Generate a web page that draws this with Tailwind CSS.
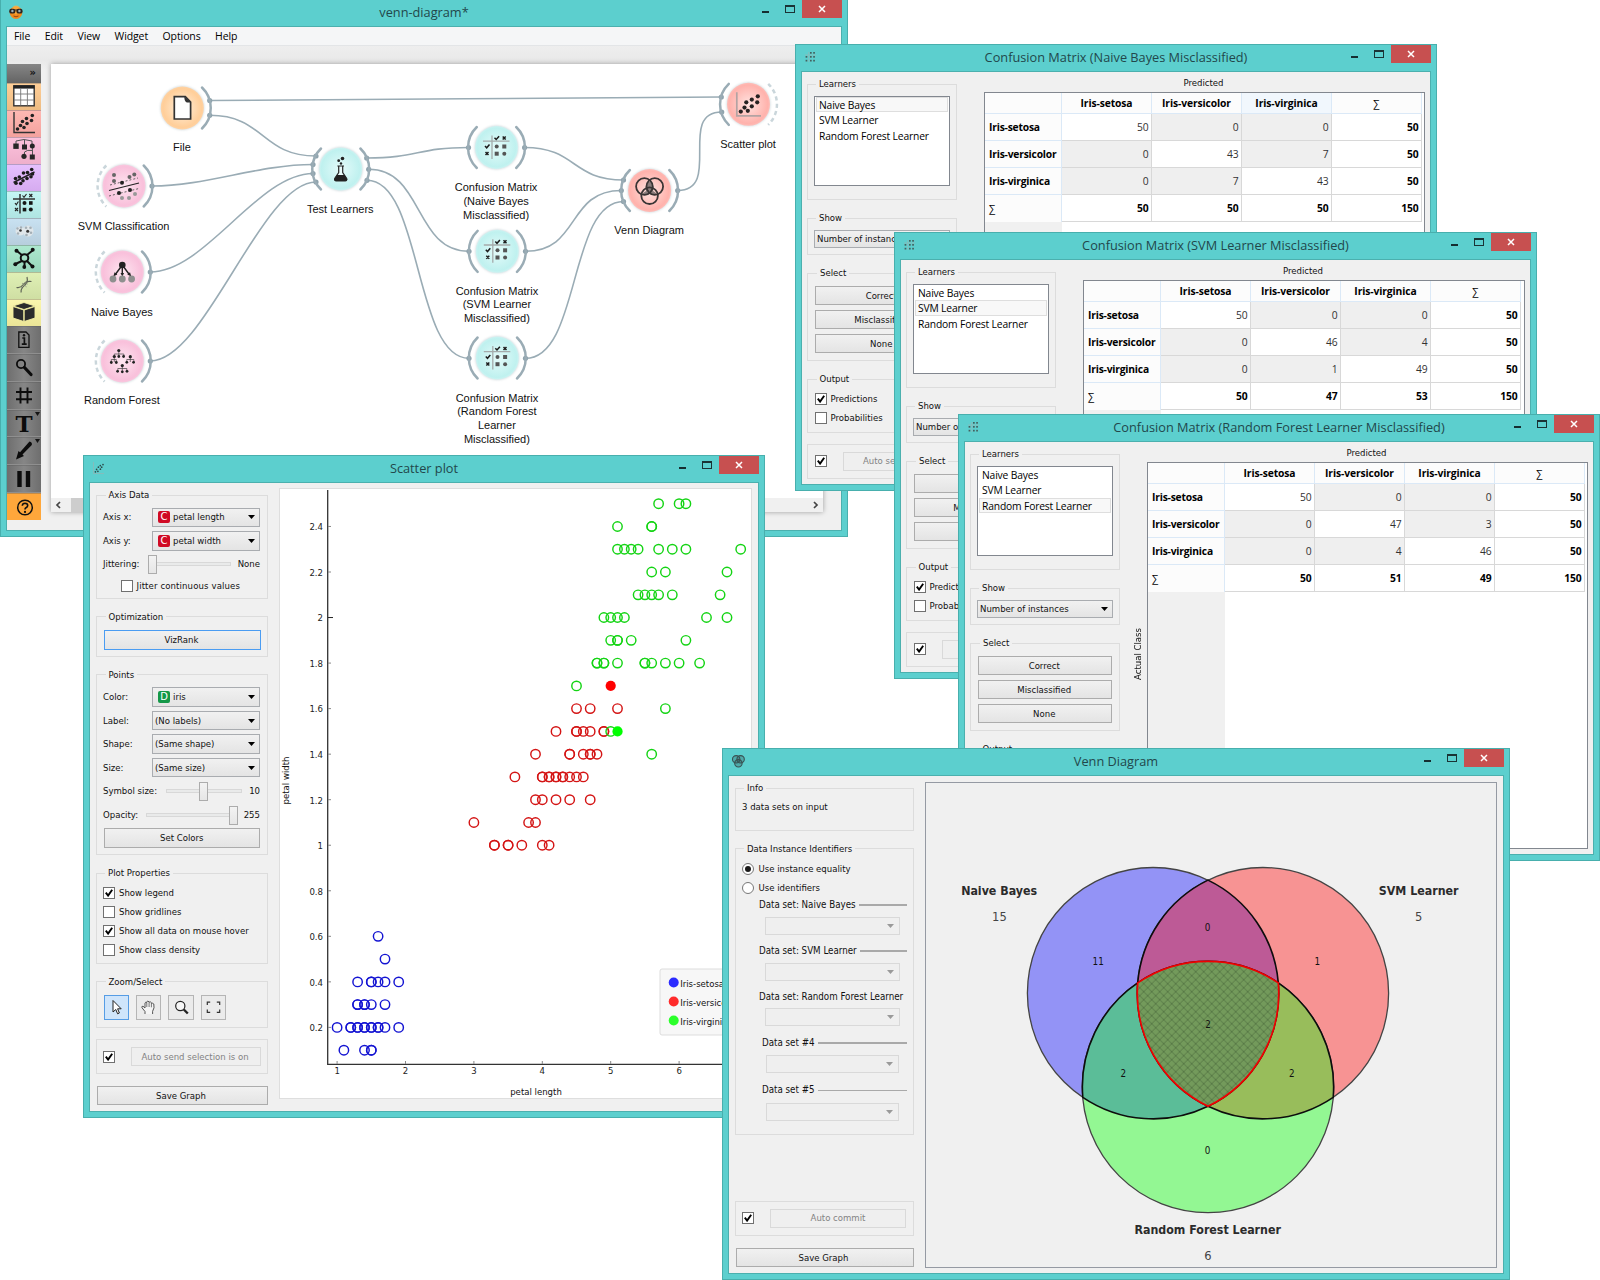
<!DOCTYPE html>
<html lang="en">
<head>
<meta charset="utf-8">
<title>venn-diagram</title>
<script src="https://cdn.jsdelivr.net/npm/@tailwindcss/browser@4"></script>
</head>
<body class="bg-white">
<div id="desktop" class="relative w-[1600px] h-[1280px] overflow-hidden bg-white font-['DejaVu_Sans_Condensed',sans-serif] text-[9.5px] leading-[12px] text-[#111]"></div>

<script>
/* ---------- shared widgets ---------- */
const win = (pos, title, icon, body) => `
<section class="absolute ${pos} flex flex-col border border-[#48afad] bg-[#5ccfce] px-[5px] pb-[5px]">
  <header class="relative h-[26px] shrink-0">
    <div class="absolute left-[3px] top-[5px]">${icon}</div>
    <h1 class="text-center text-[12.75px] leading-[25px] text-[#22474b] font-['Open_Sans',sans-serif] whitespace-nowrap">${title}</h1>
    <div class="absolute right-[0.5px] top-0 flex">
      <div class="w-[7px] h-[2px] mt-[11px] mr-[16px] bg-[#152e30]"></div>
      <div class="w-[10px] h-[8px] mt-[5px] mr-[7px] border border-t-2 border-[#1a3335]"></div>
      <div class="w-[40px] h-[18px] bg-[#c75050] grid place-items-center">
        <svg width="8" height="8" viewBox="0 0 8 8" stroke="#fff" stroke-width="1.5"><path d="M1 1L7 7M7 1L1 7"/></svg>
      </div>
    </div>
  </header>
  <div class="flex-1 min-h-0 border border-[#4bb0ae] bg-[#f0f0f0]">${body}</div>
</section>`;

const group = (title, cls, body) => `
<fieldset class="border border-[#dcdcdc] min-w-0 ${cls}">
  <legend class="ml-[2px] px-[3px] h-[12px] leading-[11px] whitespace-nowrap">${title}</legend>
  ${body}
</fieldset>`;

const caret = c => `<svg width="7" height="4" viewBox="0 0 7 4"><path d="M0 0H7L3.5 4Z" fill="${c}"/></svg>`;
const combo = (text, cls) => `<div class="flex items-center justify-between border border-[#a9acb0] bg-linear-to-b from-[#f1f1f1] to-[#e4e4e4] pl-[2px] pr-[4px] whitespace-nowrap ${cls}"><span class="flex items-center gap-[3px]">${text}</span>${caret('#000')}</div>`;
const deadCombo = cls => `<div class="flex items-center justify-end border border-[#d9d9d9] bg-[#efefef] pr-[5px] ${cls}">${caret('#9a9a9a')}</div>`;
const button = (text, cls) => `<div class="grid place-items-center border border-[#acacac] bg-linear-to-b from-[#f1f1f1] to-[#e4e4e4] whitespace-nowrap ${cls}">${text}</div>`;
const deadButton = (text, cls) => `<div class="grid place-items-center border border-[#d9d9d9] bg-[#efefef] text-[#838383] whitespace-nowrap ${cls}">${text}</div>`;
const box = on => `<span class="size-[12px] shrink-0 border border-[#707070] bg-white grid place-items-center">${on ? '<svg width="8" height="8" viewBox="0 0 8 8"><path d="M0.8 3.6L3.1 6.6L7.2 0.8" fill="none" stroke="#000" stroke-width="1.9"/></svg>' : ''}</span>`;
const check = (on, text) => `<label class="flex h-[19px] items-center gap-[4px] whitespace-nowrap">${box(on)}${text}</label>`;

/* ---------- window icons ---------- */
const owlIcon = `<svg width="15" height="15" viewBox="0 0 15 15"><circle cx="7" cy="7.6" r="6.3" fill="#f08a1c"/><circle cx="7" cy="5" r="4.4" fill="#ffb347" opacity=".7"/><rect x=".2" y="3.8" width="6.2" height="4.8" rx="2.2" fill="#2b2420"/><rect x="7.4" y="3.8" width="6.2" height="4.8" rx="2.2" fill="#2b2420"/><path d="M6 5H8" stroke="#2b2420"/><circle cx="3.4" cy="6" r="1.2" fill="#9bb0b8"/><circle cx="10.4" cy="6" r="1.2" fill="#9bb0b8"/><path d="M4.5 11Q7 12.6 9.5 11" fill="none" stroke="#8c3b10" stroke-width=".9"/></svg>`;
const matrixIcon = `<svg width="14" height="14" viewBox="0 0 14 14"><path d="M4.7 2V12M1 5H12" stroke="#8fb7b6" stroke-width=".8"/><g fill="#44605f"><rect x="6" y="2" width="1.7" height="1.7"/><rect x="9.2" y="2" width="1.7" height="1.7"/><rect x="1.6" y="6" width="1.7" height="1.7"/><rect x="6" y="6" width="1.7" height="1.7"/><rect x="9.2" y="6" width="1.7" height="1.7"/><rect x="1.6" y="9.8" width="1.7" height="1.7"/><rect x="6" y="9.8" width="1.7" height="1.7"/><rect x="9.2" y="9.8" width="1.7" height="1.7"/></g></svg>`;
const plotIcon = `<svg width="14" height="14" viewBox="0 0 14 14"><path d="M1.5 1V12.5H12" fill="none" stroke="#8fb7b6" stroke-width=".8"/><g fill="#2c4a4a"><circle cx="3.4" cy="10.8" r=".85"/><circle cx="5.9" cy="10.3" r=".85"/><circle cx="4.6" cy="8.4" r=".85"/><circle cx="6.4" cy="6.2" r=".85"/><circle cx="8.4" cy="8.2" r=".85"/><circle cx="8.3" cy="4.6" r=".85"/><circle cx="9.7" cy="6.2" r=".85"/><circle cx="11" cy="3.6" r=".85"/></g></svg>`;
const vennIcon = `<svg width="15" height="15" viewBox="0 0 15 15" fill="#2f5354" fill-opacity=".3" stroke="#3a5152" stroke-width="1.1"><circle cx="5.2" cy="5.3" r="3.7"/><circle cx="9.6" cy="5.3" r="3.7"/><circle cx="7.4" cy="9.3" r="3.7"/></svg>`;

/* ---------- workflow window ---------- */
const cellIcon = inner => `<svg class="block" width="34" height="26" viewBox="0 0 34 26">${inner}</svg>`;
const tools = [
  ['h-[27px] bg-linear-to-b from-[#ffcf98] to-[#edbb82]', '<rect x="6.8" y="2.8" width="20.4" height="20" fill="#fff" stroke="#333" stroke-width="1.4"/><path d="M6.5 4H27.5" stroke="#222" stroke-width="3.2"/><path d="M13.7 5V22.5M20.4 5V22.5M7 11H27M7 17H27" stroke="#777" stroke-width=".9"/>'],
  ['h-[27px] bg-linear-to-b from-[#ffb9b3] to-[#f3a29e]', '<path d="M7 2V22.5H28" fill="none" stroke="#333" stroke-width="1.4"/><g fill="#222"><circle cx="10.5" cy="19" r="1.8"/><circle cx="13.5" cy="15.5" r="1.8"/><circle cx="17" cy="17.5" r="1.8"/><circle cx="15.5" cy="11.5" r="1.8"/><circle cx="20" cy="13.5" r="1.8"/><circle cx="19.5" cy="8.5" r="1.8"/><circle cx="24.5" cy="10.5" r="1.8"/><circle cx="25.3" cy="5.5" r="1.8"/></g>'],
  ['h-[27px] bg-linear-to-b from-[#fcc3dd] to-[#efafcb]', '<path d="M9 8V4Q17 1 25 4V8M17.5 3V8M17.5 18V15Q20 12.5 25.5 13.5V18M25.4 8V14" fill="none" stroke="#555" stroke-width="1"/><g fill="#262626"><rect x="6.3" y="6.5" width="5.4" height="5.4"/><rect x="15" y="7.5" width="5" height="5"/><circle cx="25.3" cy="9" r="2.5"/><circle cx="17" cy="19.3" r="2.6"/><rect x="22.8" y="17.5" width="5" height="5"/></g>'],
  ['h-[27px] bg-linear-to-b from-[#e6c1ff] to-[#d6abf0]', '<path d="M6.5 18.5L27.5 8" stroke="#222" stroke-width="1.4"/><g fill="#1c1c1c"><circle cx="8.5" cy="14.5" r="1.8"/><circle cx="9" cy="19.3" r="1.8"/><circle cx="12.3" cy="13" r="1.8"/><circle cx="13.7" cy="19.5" r="1.8"/><circle cx="16.5" cy="9" r="1.8"/><circle cx="16" cy="16.7" r="1.8"/><circle cx="20.5" cy="8.5" r="1.8"/><circle cx="20" cy="14.5" r="1.8"/><circle cx="24.7" cy="5.5" r="1.8"/><circle cx="25.5" cy="10" r="1.8"/><circle cx="24" cy="12.8" r="1.8"/></g>'],
  ['h-[27px] bg-linear-to-b from-[#c5f7f5] to-[#afe4e2]', '<path d="M13 3V22.5M6 8H28" stroke="#333" stroke-width="1.5"/><path d="M15.5 4.5L17 6.3L19.5 3M8 12L9.3 13.8L11.4 10.5M22.3 3L25.3 6M25.3 3L22.3 6M8 17L11 20M11 17L8 20" fill="none" stroke="#222" stroke-width="1.1"/><g fill="#151515"><circle cx="17.5" cy="12" r="2"/><rect x="22" y="10.2" width="3.6" height="3.6"/><rect x="15.7" y="16.8" width="3.6" height="3.6"/><circle cx="23.8" cy="18.6" r="2"/></g>'],
  ['h-[27px] bg-linear-to-b from-[#c9e2f2] to-[#b7cedd]', '<g fill="#dfe6ea"><circle cx="13" cy="13" r="4.5"/><circle cx="21" cy="13" r="5.5"/></g><g fill="#a5b0b7"><circle cx="10.5" cy="10.5" r="1.2"/><circle cx="14" cy="9.5" r="1.2"/><circle cx="11" cy="15.5" r="1.2"/><circle cx="19" cy="9.8" r="1.3"/><circle cx="23.5" cy="9.8" r="1.3"/><circle cx="19.5" cy="17" r="1.3"/><circle cx="24" cy="14.8" r="1.3"/></g><circle cx="13.5" cy="12.5" r="1.3" fill="#333"/><circle cx="20.7" cy="13.2" r="1.5" fill="#333"/>'],
  ['h-[27px] bg-linear-to-b from-[#ade9cf] to-[#99d6bb]', '<g stroke="#111" stroke-width="2" fill="none"><circle cx="17.5" cy="13" r="3.8"/><path d="M14.8 10L10 6M20 10L25.5 5.5M14.8 16L8.5 19M20 16L25.5 21.5M17.5 17V21"/></g><g fill="#111"><circle cx="9.5" cy="5.7" r="2"/><circle cx="25.7" cy="4.8" r="2"/><circle cx="8.3" cy="19.3" r="2"/><circle cx="25.5" cy="21.5" r="2"/><circle cx="17.3" cy="22" r="1.9"/></g>'],
  ['h-[27px] bg-linear-to-b from-[#e0f0b6] to-[#cfdfa3]', '<g fill="none" stroke="#5f6456" stroke-width="1.2"><path d="M9.5 15.5C17.5 17.5 14 8 24.5 9.5"/><path d="M14.2 20.5C12.5 13 22.5 14.5 20 5"/></g><path d="M13.3 14.5L15.6 17M15 11L19.5 14.8M18 9.8L20.6 12.2" stroke="#8c9180" stroke-width=".8"/>'],
  ['h-[27px] bg-linear-to-b from-[#fbf7ae] to-[#ebe597]', '<g fill="#2c2c2c" stroke="#f5f0a4" stroke-width=".9"><path d="M17 3.5L28 7L17 10.5L6 7Z"/><path d="M6 7.5L16.8 11V22.5L6 19Z"/><path d="M28 7.5L17.2 11V22.5L28 19Z"/></g>'],
  ['h-[28px] bg-linear-to-r from-[#6e6e6e] via-[#868686] to-[#6e6e6e] border-b border-[#8f8f8f]', '<path d="M11.8 6H19L22 9V21.3H11.8Z" fill="none" stroke="#111" stroke-width="1.3"/><path d="M15.3 12H17.4V18M14.8 18.2H19.7" stroke="#111" stroke-width="1.7" fill="none"/><circle cx="17" cy="9.2" r="1.2" fill="#111"/>'],
  ['h-[28px] bg-linear-to-r from-[#6e6e6e] via-[#868686] to-[#6e6e6e] border-b border-[#8f8f8f]', '<circle cx="14" cy="10" r="4.1" fill="none" stroke="#0c0c0c" stroke-width="1.8"/><path d="M17.5 13.5L24 20.5" stroke="#0c0c0c" stroke-width="3.2" stroke-linecap="round"/>'],
  ['h-[28px] bg-linear-to-r from-[#6e6e6e] via-[#868686] to-[#6e6e6e] border-b border-[#8f8f8f]', '<path d="M13.5 5.5V21.5M20.5 5.5V21.5M9 10H25M9 17.2H25" stroke="#0c0c0c" stroke-width="1.9"/>'],
  ['h-[27.5px] bg-linear-to-r from-[#6e6e6e] via-[#868686] to-[#6e6e6e] border-b border-[#8f8f8f]', '<text x="17" y="22" text-anchor="middle" font-family="DejaVu Serif, serif" font-weight="700" font-size="23" fill="#0c0c0c">T</text><path d="M28 2H33L30.5 6Z" fill="#151515"/>'],
  ['h-[28px] bg-linear-to-r from-[#6e6e6e] via-[#868686] to-[#6e6e6e] border-b border-[#8f8f8f]', '<path d="M22.5 4.5Q25.5 5 24.8 8L15.5 17.5L17 19L9 22.5L11.5 14L13 15.2Z" fill="#0c0c0c"/><path d="M28 2H33L30.5 6Z" fill="#151515"/>'],
  ['h-[28px] bg-linear-to-r from-[#6e6e6e] via-[#868686] to-[#6e6e6e] border-b border-[#8f8f8f]', '<path d="M12.5 6V22M21 6V22" stroke="#0c0c0c" stroke-width="4.4"/>'],
  ['h-[27px] bg-[#ffa73b]', '<circle cx="18" cy="14.5" r="7.3" fill="none" stroke="#111" stroke-width="1.5"/><path d="M15.3 12.8Q15.4 10.2 18 10.2Q20.7 10.3 20.7 12.6Q20.7 14 19 14.8Q18 15.4 18 16.6" fill="none" stroke="#111" stroke-width="1.6"/><circle cx="18" cy="18.9" r="1.1" fill="#111"/>'],
];

const confusionGlyph = '<path d="M-4.5 -12V11.5M-13.5 -6.3H13" stroke="#a5abab" stroke-width="1.3"/><path d="M-2 -9.8L-.3 -8L2.6 -11.3M-11.5 -1.5L-9.8 .3L-7 -3M6.2 -11L9.2 -8M9.2 -11L6.2 -8M-11 4.5L-8 7.5M-8 4.5L-11 7.5" stroke="#1c1c1c" stroke-width="1.5" fill="none"/><g fill="#555"><circle cx=".2" cy="-1" r="2"/><rect x="5.8" y="-3" width="4" height="4"/><rect x="-1.8" y="4.2" width="4" height="4"/><circle cx="7.8" cy="6.2" r="2"/></g>';
const nodes = [
  {x:182.3,y:108,c:'orange',out:1,label:['File'],ly:148,g:'<path d="M-8 -11.3H3L8.3 -6V11H-8Z" fill="#fff" stroke="#333" stroke-width="1.7"/><path d="M2 -11.5L8.8 -5.5H4.5Q2 -6.5 2 -11.5Z" fill="#333"/>'},
  {x:124,y:186,c:'pink',out:1,dashIn:1,label:['SVM Classification'],ly:226.5,g:'<path d="M-15 4.5L15 -3" stroke="#222" stroke-width="1.2"/><path d="M-14 -1L14 -8M-15 10L15 2.5" stroke="#555" stroke-width=".9" stroke-dasharray="2 2"/><g fill="#222"><circle cx="-2" cy="-3.3" r="2"/><circle cx="-5" cy="7" r="2"/><circle cx="6" cy="4" r="2"/></g><g fill="#666"><circle cx="-10" cy="-11" r="2"/><circle cx="-10" cy="-5" r="2"/><circle cx="5.5" cy="-9" r="2"/><circle cx="10.3" cy="-11.5" r="2"/></g><g fill="#999"><circle cx="-2" cy="12" r="2"/><circle cx="5" cy="12" r="2"/><circle cx="11" cy="8" r="2"/></g>'},
  {x:122.3,y:272,c:'pink',out:1,dashIn:1,label:['Naive Bayes'],ly:312.3,g:'<path d="M0 -7L-7 2.5M0 -7V2.5M0 -7L7 2.5" stroke="#222" stroke-width="1.4"/><path d="M-9 4.5L-7.7 .3L-5 2.5ZM9 4.5L7.7 .3L5 2.5ZM-1.8 1H1.8L0 4.5Z" fill="#222"/><circle cy="-7" r="3.3" fill="#222"/><g fill="#8f8f8f"><circle cx="-9.3" cy="7" r="3.4"/><circle cy="7" r="3.4"/><circle cx="9.3" cy="7" r="3.4"/></g>'},
  {x:122.3,y:361,c:'pink',out:1,dashIn:1,label:['Random Forest'],ly:401,g:'<path d="M-3.5 -10V-6M-8 -5V-7H1.5V-5M-8 -4V1M-11 1V-1.5H-6V1M8 -4V1M4.5 1V-1.5H11.5V1M0 5V10M-4.5 10V7.5H4.5V10" fill="none" stroke="#444" stroke-width=".7"/><g fill="#222"><circle cx="-3.5" cy="-10.5" r="1.6"/><circle cx="-8" cy="-4.5" r="1.6"/><circle cx="-3.5" cy="-4.5" r="1.4"/><circle cx="1.3" cy="-4.5" r="1.4"/><circle cx="-11" cy="1.5" r="1.4"/><circle cx="-6" cy="1.5" r="1.4"/><circle cx="8" cy="-4.3" r="1.6"/><circle cx="4.5" cy="1.3" r="1.4"/><circle cx="11.3" cy="1.3" r="1.4"/><circle cx="0" cy="4.6" r="1.6"/><circle cx="-4.7" cy="10.3" r="1.4"/><circle cx="0" cy="10.8" r="1.4"/><circle cx="4.7" cy="10.3" r="1.4"/></g>'},
  {x:340.7,y:169,c:'cyan',in:1,out:1,label:['Test Learners'],ly:209.5,g:'<path d="M-3.3 -3H3.3M-2 -2.5V3.5L-6 9.5Q-6.5 11.6 -4.5 11.8H4.5Q6.5 11.6 6 9.5L2 3.5V-2.5" fill="#e9fbfb" stroke="#262626" stroke-width="1.2"/><path d="M-3.9 6H3.9L6.5 10.5Q6.5 12 4.5 12H-4.5Q-6.5 12 -6.5 10.5Z" fill="#222"/><g fill="#222"><circle cx="-2" cy="-8.3" r="1.4"/><circle cx="1.8" cy="-10.5" r="1.8"/><circle cx=".3" cy="-5.5" r="1.2"/></g>'},
  {x:496.5,y:147.5,c:'cyan',in:1,out:1,label:['Confusion Matrix','(Naive Bayes','Misclassified)'],ly:188,g:confusionGlyph},
  {x:497.3,y:251.3,c:'cyan',in:1,out:1,label:['Confusion Matrix','(SVM Learner','Misclassified)'],ly:291.5,g:confusionGlyph},
  {x:497.3,y:358,c:'cyan',in:1,out:1,label:['Confusion Matrix','(Random Forest','Learner','Misclassified)'],ly:398.5,g:confusionGlyph},
  {x:649.6,y:190.5,c:'red',in:1,out:1,label:['Venn Diagram'],ly:231,g:'<path d="M0 -9A8.3 8.3 0 0 1 3.5 .5A8.3 8.3 0 0 1 7.5 4A8.3 8.3 0 0 1 0 3.5A8.3 8.3 0 0 1 -7.5 4A8.3 8.3 0 0 1 -3.5 .5A8.3 8.3 0 0 1 0 -9Z" fill="#8b7c7b"/><g fill="none" stroke="#3a3434" stroke-width="1.8"><circle cx="-5.2" cy="-4" r="8.3"/><circle cx="5.2" cy="-4" r="8.3"/><circle cx="0" cy="5.2" r="8.3"/></g>'},
  {x:748.5,y:104.3,c:'red',in:1,dashOut:1,label:['Scatter plot'],ly:145,g:'<path d="M-11.7 -12V11.5H12.5" fill="none" stroke="#b3a3a3" stroke-width="1.7"/><g fill="#262222"><circle cx="-7.7" cy="7.3" r="2.1"/><circle cx="-4" cy="3.3" r="2.1"/><circle cx="-.7" cy="6.5" r="2.1"/><circle cx="-2.2" cy="-2" r="2.1"/><circle cx="3.3" cy="2" r="2.1"/><circle cx="3.3" cy="-4.7" r="2.1"/><circle cx="8.7" cy="-2" r="2.1"/><circle cx="9.3" cy="-8" r="2.1"/></g>'},
];
const links = [
  [209.7,100.5,721.3,97],[209.7,115.3,316,156],[152,186,313,164.5],[150.3,272,313,173.5],[150.3,361,316,182],
  [366.7,158,468.5,147.5],[368.7,169.3,469,251.3],[367,180.3,469,358.3],
  [524.6,147.5,623.5,180],[525.5,251.3,621.3,190.5],[525.5,358.3,623.5,201.5],[677.7,190.5,721.7,112],
];
const linkPath = ([a,b,c,d]) => { const k = Math.min(Math.hypot(c-a,d-b)/2, 55); return `<path d="M${a} ${b}C${a+k} ${b} ${c-k} ${d} ${c} ${d}"/>`; };
const diagram = `
<svg class="block" width="772" height="434" viewBox="51 64 772 434">
  <defs>
    <radialGradient id="orange"><stop offset="0" stop-color="#fff0dd"/><stop offset=".9" stop-color="#ffce99"/><stop offset="1" stop-color="#ffd3a5"/></radialGradient>
    <radialGradient id="pink"><stop offset="0" stop-color="#fde6f0"/><stop offset=".9" stop-color="#f9c0db"/><stop offset="1" stop-color="#f9c9df"/></radialGradient>
    <radialGradient id="cyan"><stop offset="0" stop-color="#e5fbfa"/><stop offset=".9" stop-color="#bff1ef"/><stop offset="1" stop-color="#cdf3f2"/></radialGradient>
    <radialGradient id="red"><stop offset="0" stop-color="#ffe3e0"/><stop offset=".9" stop-color="#ffb2ac"/><stop offset="1" stop-color="#ffbdb8"/></radialGradient>
    <filter id="soft" x="-20%" y="-20%" width="140%" height="140%"><feGaussianBlur stdDeviation="1"/></filter>
  </defs>
  <g fill="none" stroke="#9aacb5" stroke-width="1.6">${links.map(linkPath).join('')}</g>
  <g fill="#8fa3ad">${links.map(([a,b,c,d]) => `<circle cx="${a}" cy="${b}" r="2.6"/><circle cx="${c}" cy="${d}" r="2.6"/>`).join('')}</g>
  ${nodes.map(n => `<g transform="translate(${n.x} ${n.y})">
    ${n.out ? '<path d="M19.7 -20.5A28.4 28.4 0 0 1 19.7 20.5" fill="none" stroke="#9aacb5" stroke-width="2.5" stroke-linecap="round"/>' : ''}
    ${n.in ? '<path d="M-19.7 -20.5A28.4 28.4 0 0 0 -19.7 20.5" fill="none" stroke="#9aacb5" stroke-width="2.5" stroke-linecap="round"/>' : ''}
    ${n.dashIn ? '<path d="M-17.7 -20.5A28.4 28.4 0 0 0 -17.7 20.5" fill="none" stroke="#cad6db" stroke-width="2.5" stroke-dasharray="4.2 3.2"/>' : ''}
    ${n.dashOut ? '<path d="M19.7 -20.5A28.4 28.4 0 0 1 19.7 20.5" fill="none" stroke="#cad6db" stroke-width="2.5" stroke-dasharray="4.2 3.2"/>' : ''}
    <circle r="22" fill="#9fb2ba" opacity=".45" filter="url(#soft)"/>
    <circle r="21.5" fill="url(#${n.c})"/>${n.g}</g>
    <g font-family="Liberation Sans, Arial, sans-serif" font-size="11" fill="#111" text-anchor="middle">${n.label.map((t,i) => `<text x="${n.x - .4}" y="${n.ly + 3.3 + i*13.6}">${t}</text>`).join('')}</g>`).join('')}
</svg>`;

const mainBody = `
<div class="flex flex-col h-full bg-[#efefef]">
  <nav class="flex h-[19px] shrink-0 items-center border-b border-[#e3e5e7] bg-[#f5f6f7] pl-[7px] gap-[14.5px] font-['Open_Sans',sans-serif] text-[10.5px] tracking-[-0.1px] text-black">
    <span>File</span><span>Edit</span><span>View</span><span>Widget</span><span>Options</span><span>Help</span>
  </nav>
  <div class="flex flex-1 min-h-0 pt-[18px] bg-linear-to-b from-[#eeeeee] from-0% via-[#e9e9e9] via-3% to-[#f0f0f0] to-5%">
    <div class="w-[34px] shrink-0 flex flex-col">
      <div class="h-[18.5px] shrink-0 bg-linear-to-b from-[#868686] to-[#646464] flex justify-end pr-[5px] text-[11px] leading-[18px] font-bold text-[#111]">»</div>
      ${tools.map(([c,i]) => `<div class="shrink-0 overflow-hidden shadow-[inset_0_1px_0_rgba(90,90,90,.35)] ${c}">${cellIcon(i)}</div>`).join('')}
    </div>
    <div class="ml-[10px] w-[772px] h-[448px] bg-white shadow-[0_0_5px_rgba(0,0,0,.35)] flex flex-col">
      ${diagram}
      <div class="h-[14px] bg-[#f0f0f0] flex items-center">
        <svg class="ml-[4px] mr-[9px]" width="7" height="8" viewBox="0 0 7 8"><path d="M5 1L2 4L5 7" fill="none" stroke="#444" stroke-width="1.7"/></svg>
        <div class="w-[620px] h-[14px] bg-[#cdcdcd]"></div>
        <svg class="ml-auto mr-[4px]" width="7" height="8" viewBox="0 0 7 8"><path d="M2 1L5 4L2 7" fill="none" stroke="#444" stroke-width="1.7"/></svg>
      </div>
    </div>
  </div>
</div>`;

/* ---------- confusion matrix windows ---------- */
const classes = ['Iris-setosa','Iris-versicolor','Iris-virginica'];
const learners = ['Naive Bayes','SVM Learner','Random Forest Learner'];
const confusion = (sel, m, sums, hover) => `
<div class="flex h-full pl-[5px] pr-[5px]">
  <aside class="w-[150px] shrink-0 pt-[6px] flex flex-col gap-3">
    ${group('Learners','h-[122px] px-[6px]',`
      <ul class="mt-[6px] h-[90px] border border-[#82878f] bg-white px-px font-['Open_Sans',sans-serif] text-[10.3px] tracking-[-0.16px] text-black">
        ${learners.map((t,i) => `<li class="h-[15.3px] border pl-[2px] leading-[14px] whitespace-nowrap ${i===sel ? 'border-[#dedede] bg-[#f8f8f8]' : 'border-transparent'}">${t}</li>`).join('')}
      </ul>`)}
    ${group('Show','h-[43px] px-[6px]', combo('Number of instances','mt-[6px] h-[18px]'))}
    ${group('Select','h-[94px] px-[7px]', `<div class="mt-[7px] flex flex-col gap-[5px]">${['Correct','Misclassified','None'].map(t => button(t,'h-[19px] pr-[1.5px]')).join('')}</div>`)}
    ${group('Output','h-[60px] px-[6.5px]', `<div class="pt-[4px]">${check(1,'Predictions')}${check(0,'Probabilities')}</div>`)}
    <div class="-mt-[1.5px] h-[35px] border border-[#dcdcdc] px-[6.5px] flex items-center justify-between">${box(1)}${deadButton('Auto send is on','w-[107px] h-[19px]')}</div>
  </aside>
  <div class="w-[27px] shrink-0 grid place-items-center pl-[8px]"><span class="[writing-mode:vertical-rl] rotate-180 whitespace-nowrap pb-[12px]">Actual Class</span></div>
  <div class="flex-1 flex flex-col pt-[5px] pb-[5px] min-w-0">
    <div class="text-center h-[15px] leading-[12px] pr-[2px]">Predicted</div>
    <div class="flex-1 border border-[#82878f] bg-white flex flex-col font-['Open_Sans',sans-serif] text-[10.3px] tracking-[-0.1px] text-black">
      <div class="grid grid-cols-[77px_90px_90px_90px_90px] grid-rows-[21px_27px_27px_27px_27px] shrink-0">
        <div class="border-r border-b border-[#dbe9f7] bg-[#fcfcfc]"></div>
        ${classes.map((t,i) => `<div class="border-r border-b border-[#dbe9f7] text-center font-bold leading-[20px] ${hover===i ? 'bg-[#f1f7fd]' : 'bg-[#fcfcfc]'}">${t}</div>`).join('')}
        <div class="border-r border-b border-[#dbe9f7] bg-[#fcfcfc] text-center leading-[21px]">∑</div>
        ${m.map((row,r) => `<div class="border-r border-b border-[#dbe9f7] bg-[#fcfcfc] pl-[4px] font-bold leading-[27px] whitespace-nowrap tracking-[-0.2px]">${classes[r]}</div>
          ${row.map((v,c) => `<div class="border-r border-b border-[#d8d8d8] text-right pr-[2.5px] leading-[26px] text-[#333] ${r===c ? 'bg-white' : 'bg-[#efefef]'}">${v}</div>`).join('')}
          <div class="border-r border-b border-[#d8d8d8] text-right pr-[2.5px] leading-[26px] font-bold">50</div>`).join('')}
        <div class="border-r border-[#dbe9f7] bg-[#fcfcfc] pl-[4px] leading-[27px]">∑</div>
        ${sums.map(v => `<div class="border-r border-b border-[#d8d8d8] text-right pr-[2.5px] leading-[26px] font-bold">${v}</div>`).join('')}
      </div>
      <div class="flex-1 w-[77px] bg-[#f0f0f0]"></div>
    </div>
  </div>
</div>`;

/* ---------- scatter plot window ---------- */
const px = v => 337.1 + 68.4*(v-1), py = v => 1027.4 - 227.7*(v-0.2);
const series = {
  '#1414d2': {0.6:[1.6],0.5:[1.7],0.4:[1.3,1.5,1.5,1.6,1.7,1.9],0.3:[1.3,1.3,1.4,1.4,1.5,1.7],0.2:[1,1.2,1.2,1.3,1.3,1.4,1.4,1.5,1.5,1.6,1.6,1.7,1.9],0.1:[1.1,1.4,1.5,1.5]},
  '#d41414': {1.6:[4.5,4.7,5.1],1.5:[4.2,4.5,4.5,4.6,4.7,4.9,4.9],1.4:[3.9,4.4,4.4,4.6,4.7,4.7,4.8],1.3:[3.6,4,4,4.1,4.1,4.2,4.2,4.3,4.3,4.4,4.5,4.6],1.2:[3.9,4,4.2,4.4,4.7],1.1:[3,3.8,3.9],1.0:[3.3,3.3,3.5,3.5,3.7,4,4.1]},
  '#14d414': {2.5:[5.7,6,6.1],2.4:[5.1,5.6,5.6],2.3:[5.1,5.2,5.3,5.4,5.7,5.9,6.1,6.9],2.2:[5.6,5.8,6.7],2.1:[5.4,5.5,5.6,5.7,5.9,6.6],2.0:[4.9,5,5.1,5.2,6.4,6.7],1.9:[5,5.1,5.1,5.3,6.1],1.8:[4.8,4.8,4.9,4.9,5.1,5.5,5.5,5.6,5.8,6,6.3],1.7:[4.5],1.6:[5.8],1.5:[5],1.4:[5.6]},
};
const chart = `
<svg class="block" width="471" height="608" viewBox="280 489 471 608">
  <path d="M327.7 490V1064.3H748" fill="none" stroke="#333" stroke-width="1.3"/>
  <g font-family="DejaVu Sans Condensed, sans-serif" font-size="9.5" fill="#222">
    ${[.2,.4,.6,.8,1,1.2,1.4,1.6,1.8,2,2.2,2.4].map(v => `<path d="M328 ${py(v)}h${v===2?5:3}" stroke="${v===2?'#222':'#888'}"/><text x="323" y="${py(v)+3.8}" text-anchor="end">${v}</text>`).join('')}
    ${[1,2,3,4,5,6].map(v => `<path d="M${px(v)} 1064v-3" stroke="#888"/><text x="${px(v)}" y="1074.3" text-anchor="middle">${v}</text>`).join('')}
    <text x="536" y="1094.6" text-anchor="middle" fill="#111">petal length</text>
    <text transform="translate(289.3 780.5) rotate(-90)" text-anchor="middle" fill="#111">petal width</text>
  </g>
  ${Object.entries(series).map(([c,rows]) => `<g fill="none" stroke="${c}" stroke-width="1.45">${Object.entries(rows).map(([y,xs]) => xs.map(x => `<circle cx="${px(x).toFixed(1)}" cy="${py(+y).toFixed(1)}" r="4.7"/>`).join('')).join('')}</g>`).join('')}
  <circle cx="${px(5)}" cy="${py(1.7)}" r="5.1" fill="#f00"/><circle cx="${px(5.1)}" cy="${py(1.5)}" r="5.1" fill="#0f0"/>
  <rect x="660" y="969" width="86" height="66" rx="2" fill="#f7f7f7" stroke="#ddd"/>
  <g font-family="DejaVu Sans Condensed, sans-serif" font-size="9.5" fill="#111">
    <circle cx="673.7" cy="982.5" r="5" fill="#2b2bff"/><text x="680.2" y="986.6">Iris-setosa</text>
    <circle cx="673.7" cy="1001.5" r="5" fill="#ff2b2b"/><text x="680.2" y="1005.6">Iris-versicolor</text>
    <circle cx="673.7" cy="1020.5" r="5" fill="#2bff2b"/><text x="680.2" y="1024.6">Iris-virginica</text>
  </g>
</svg>`;
const tag = (t,c) => `<span class="ml-[3px] size-[12px] rounded-[2px] ${c} text-white text-[10px] leading-[12px] text-center font-['DejaVu_Sans']">${t}</span>`;
const comboRow = (l,t) => `<div class="flex h-[19.5px] items-center"><span class="w-[49px] shrink-0 -ml-[0.5px]">${l}</span>${combo(t,'flex-1 h-[19.5px]')}</div>`;
const handle = `<span class="absolute -top-[8px] w-[9px] h-[19px] border border-[#acacac] bg-linear-to-b from-[#f3f3f3] to-[#e6e6e6]`;
const sliderRow = (l,track,knob,v) => `<div class="flex h-[19.5px] items-center whitespace-nowrap"><span class="-ml-[0.5px]">${l}</span><span class="relative ml-auto h-[4px] border border-[#d8d8d8] bg-[#e9eaea] ${track}">${handle} ${knob}"></span></span><span class="text-right">${v}</span></div>`;
const modeBtn = (cls,svg) => `<div class="size-[25.4px] border grid place-items-center ${cls}">${svg}</div>`;
const scatterBody = `
<div class="flex h-full">
  <aside class="ml-[6px] w-[172px] shrink-0 pt-[6px] flex flex-col gap-[11.7px]">
    ${group('Axis Data','h-[110px] pl-[6.5px] pr-[7px]', `<div class="pt-[6.6px] flex flex-col gap-[4px]">
      ${comboRow('Axis x:', tag('C','bg-[#d00a24]')+'petal length')}
      ${comboRow('Axis y:', tag('C','bg-[#d00a24]')+'petal width')}
      ${sliderRow('Jittering:','w-[80px] mr-[7px]','-left-[4px]','None')}
      <label class="flex h-[15px] items-center gap-[4px] pl-[17px] tracking-[0.12px]">${box(0)}Jitter continuous values</label></div>`)}
    ${group('Optimization','h-[46.5px] px-[6.5px]', button('VizRank','mt-[7px] h-[20px] pr-[1px] border-[#4a9cf2]!'))}
    ${group('Points','h-[186.5px] pl-[6.5px] pr-[7px]', `<div class="pt-[6.6px] flex flex-col gap-[4px]">
      ${comboRow('Color:', tag('D','bg-[#149848]')+'iris')}
      ${comboRow('Label:','(No labels)')}
      ${comboRow('Shape:','(Same shape)')}
      ${comboRow('Size:','(Same size)')}
      ${sliderRow('Symbol size:','w-[76px] mr-[7px]','left-[32px]','10')}
      ${sliderRow('Opacity:','w-[91px] mr-[7px]','left-[82px]','255')}
      ${button('Set Colors','h-[19.5px]')}</div>`)}
    ${group('Plot Properties','h-[97px] px-[6px]', `<div class="pt-[4.3px]">${check(1,'Show legend')}${check(0,'Show gridlines')}${check(1,'Show all data on mouse hover')}${check(0,'Show class density')}</div>`)}
    ${group('Zoom/Select','h-[52px] px-[6.5px]', `<div class="mt-[7px] flex gap-[7.1px]">
      ${modeBtn('border-[#569de5] bg-[#cfe5fb]','<svg width="17" height="17" viewBox="0 0 17 17"><path d="M5 1.5V13L7.8 10.5L9.6 14.8L11.4 14L9.6 9.8H13.2Z" fill="#fff" stroke="#222" stroke-width="1"/></svg>')}
      ${modeBtn('border-[#b5b5b5] bg-[#ebebeb]','<svg width="17" height="17" viewBox="0 0 17 17"><path d="M5 15V12.5L2 8.8Q1.3 7.2 3 7.2L5 9V4Q5.5 2.6 6.7 3.8V2.8Q7.8 1.5 9 2.8V3.3Q10.3 2.2 11.4 3.6V4.6Q12.8 3.6 13.8 5Q14.8 9 12.6 12.3V15" fill="#f4f4f4" stroke="#555" stroke-width="1"/><path d="M6.8 4V8M9.1 3.5V8M11.4 4.5V8.3" stroke="#666" stroke-width=".9"/></svg>')}
      ${modeBtn('border-[#b5b5b5] bg-[#ebebeb]','<svg width="17" height="17" viewBox="0 0 17 17"><circle cx="7.3" cy="7" r="4.6" fill="#f6f6f6" stroke="#222" stroke-width="1.2"/><path d="M10.8 10.5L14.8 14.5" stroke="#222" stroke-width="2.4"/></svg>')}
      ${modeBtn('border-[#b5b5b5] bg-[#ebebeb]','<svg width="17" height="17" viewBox="0 0 17 17"><path d="M2.3 6V3.2H5.2M11.8 3.2H14.7V6M14.7 10.5V13.3H11.8M5.2 13.3H2.3V10.5" fill="none" stroke="#333" stroke-width="1.2"/></svg>')}
    </div>`)}
    <div class="h-[35px] border border-[#dcdcdc] px-[6px] flex items-center justify-between">${box(1)}${deadButton('Auto send selection is on','w-[130px] h-[19px] pr-[2px]')}</div>
    ${button('Save Graph','h-[19px] mx-[0.5px] pr-[2px]')}
  </aside>
  <div class="ml-[11px] mt-[5px] mb-[12px] w-[473px] border border-[#dedede] bg-white">${chart}</div>
</div>`;

/* ---------- venn window ---------- */
const dataSet = (t, cls, rule = '<span class="flex-1 h-[1.5px] bg-[#a9a9a9]"></span>') => `<div class="${cls}"><div class="flex h-[12px] items-center gap-[3px] whitespace-nowrap text-[9.7px]"><span>${t}</span>${rule}</div></div>`;
const radio = on => `<span class="size-[12px] rounded-full border border-[#777] bg-white grid place-items-center">${on ? '<span class="size-[6px] rounded-full bg-[#1a1a1a]"></span>' : ''}</span>`;
const R = 125.7;
const vennSvg = `
<svg class="block" width="570" height="484" viewBox="926.3 783.3 570 484">
  <defs><pattern id="hatch" width="8" height="8" patternUnits="userSpaceOnUse"><path d="M0 0L8 8M8 0L0 8" stroke="#3f5c33" stroke-opacity=".75" stroke-width=".7"/></pattern></defs>
  <g stroke="#444" stroke-width="1.3">
    <circle cx="1153.4" cy="993.5" r="${R}" fill="#9393f6"/><circle cx="1263.2" cy="993.5" r="${R}" fill="#f79393"/><circle cx="1208.3" cy="1087.3" r="${R}" fill="#93f793"/>
  </g>
  <g stroke="#0d0d0d" stroke-width="1.6">
    <path fill="#bd5a96" d="M1138 983.2A${R} ${R} 0 0 1 1208.3 880.4A${R} ${R} 0 0 1 1278.6 983.2A${R} ${R} 0 0 0 1138 983.2Z"/>
    <path fill="#5bbd98" d="M1083.1 1097.6A${R} ${R} 0 0 1 1138 983.2A${R} ${R} 0 0 0 1208.3 1106.6A${R} ${R} 0 0 1 1083.1 1097.6Z"/>
    <path fill="#98bd5b" d="M1278.6 983.2A${R} ${R} 0 0 1 1333.5 1097.6A${R} ${R} 0 0 1 1208.3 1106.6A${R} ${R} 0 0 0 1278.6 983.2Z"/>
  </g>
  <path fill="#739a5b" d="M1138 983.2A${R} ${R} 0 0 1 1278.6 983.2A${R} ${R} 0 0 1 1208.3 1106.6A${R} ${R} 0 0 1 1138 983.2Z"/>
  <path fill="url(#hatch)" stroke="#f00000" stroke-width="1.7" d="M1138 983.2A${R} ${R} 0 0 1 1278.6 983.2A${R} ${R} 0 0 1 1208.3 1106.6A${R} ${R} 0 0 1 1138 983.2Z"/>
  <g font-family="DejaVu Sans Condensed, sans-serif" text-anchor="middle">
    <g font-size="9.8" fill="#111"><text x="1098.5" y="965.6">11</text><text x="1207.9" y="931.3">0</text><text x="1317.5" y="965.6">1</text><text x="1208.3" y="1028.2">2</text><text x="1123.7" y="1077">2</text><text x="1292" y="1077">2</text><text x="1207.9" y="1154.3">0</text></g>
    <g font-size="12.3" font-weight="700" fill="#2b2b2b"><text x="999.4" y="895">Naive Bayes</text><text x="1419" y="895">SVM Learner</text><text x="1208" y="1234">Random Forest Learner</text></g>
    <g font-size="12.8" fill="#444"><text x="999.7" y="921.2">15</text><text x="1418.9" y="921.2">5</text><text x="1208.3" y="1260.5">6</text></g>
  </g>
</svg>`;
const vennBody = `
<div class="flex h-full">
  <aside class="ml-[6px] w-[179px] shrink-0 pt-[6px] flex flex-col">
    ${group('Info','h-[49px] px-[6px]','<p class="mt-[7px]">3 data sets on input</p>')}
    ${group('Data Instance Identifiers','mt-[11.5px] h-[292.5px] px-[6px]', `
      <label class="mt-[4.5px] flex h-[19px] items-center gap-[4.5px]">${radio(1)}Use instance equality</label>
      <label class="flex h-[19px] items-center gap-[4.5px]">${radio(0)}Use identifiers</label>
      ${dataSet('Data set: Naive Bayes','mt-[2px] ml-[17px]')}${deadCombo('mt-[5.8px] h-[18px] ml-[23px] mr-[7px]')}
      ${dataSet('Data set: SVM Learner','mt-[10px] ml-[17px]')}${deadCombo('mt-[5.8px] h-[18px] ml-[23px] mr-[7px]')}
      ${dataSet('Data set: Random Forest Learner','mt-[10px] ml-[17px]','')}${deadCombo('mt-[5.8px] h-[18px] ml-[23px] mr-[7px]')}
      ${dataSet('Data set #4','mt-[10.4px] ml-[20px]')}${deadCombo('mt-[6.7px] h-[17.5px] ml-[24px] mr-[8px]')}
      ${dataSet('Data set #5','mt-[11.5px] ml-[20px]')}${deadCombo('mt-[7px] h-[17.5px] ml-[24px] mr-[8px]')}`)}
    <div class="mt-[66px] h-[34.5px] border border-[#dcdcdc] px-[6px] pr-[7px] flex items-center justify-between">${box(1)}${deadButton('Auto commit','w-[136px] h-[19px]')}</div>
    ${button('Save Graph','mt-[12.5px] mx-[0.5px] h-[19px] pr-[2px]')}
  </aside>
  <div class="ml-[11px] mt-[6px] w-[572px] h-[486px] border border-[#959aa3]">${vennSvg}</div>
</div>`;

document.getElementById('desktop').innerHTML =
  win('left-0 -top-px w-[848px] h-[538px]', 'venn-diagram*', owlIcon, mainBody) +
  win('left-[83px] top-[455px] w-[682px] h-[663px]', 'Scatter plot', plotIcon, scatterBody) +
  win('left-[795px] top-[44px] w-[642px] h-[447px]', 'Confusion Matrix (Naive Bayes Misclassified)', matrixIcon, confusion(0, [[50,0,0],[0,43,7],[0,7,43]], [50,50,50,150], 2)) +
  win('left-[894px] top-[232px] w-[643px] h-[447px]', 'Confusion Matrix (SVM Learner Misclassified)', matrixIcon, confusion(1, [[50,0,0],[0,46,4],[0,1,49]], [50,47,53,150])) +
  win('left-[958px] top-[414px] w-[642px] h-[447px]', 'Confusion Matrix (Random Forest Learner Misclassified)', matrixIcon, confusion(2, [[50,0,0],[0,47,3],[0,4,46]], [50,51,49,150])) +
  win('left-[722px] top-[748px] w-[788px] h-[532px]', 'Venn Diagram', vennIcon, vennBody);
</script>
</body>
</html>
